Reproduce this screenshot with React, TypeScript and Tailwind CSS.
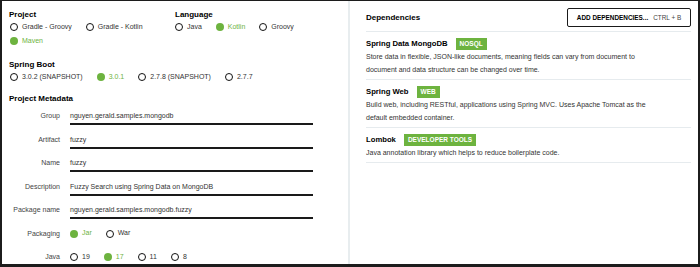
import React from "react";

function Radio({ label, selected }: { label: string; selected?: boolean }) {
  return (
    <div className="flex items-center gap-[4px] h-[14px]">
      {selected ? (
        <span className="block w-[8px] h-[8px] rounded-full bg-[#6db33f]" />
      ) : (
        <span className="block w-[8px] h-[8px] rounded-full border-[1.5px] border-[#111]" />
      )}
      <span className={selected ? "text-[#6db33f]" : "text-[#333]"}>{label}</span>
    </div>
  );
}

function Heading({ children }: { children: React.ReactNode }) {
  return <div className="text-[8px] leading-[11px] font-bold text-black">{children}</div>;
}

function Field({ label, value }: { label: string; value: string }) {
  return (
    <div className="flex items-start h-[15px]">
      <div className="w-[51px] text-right leading-[12px] text-[#444]">{label}</div>
      <div className="ml-[10px] w-[243px] leading-[12px] pb-[1px] border-b-2 border-[#1a1a1a] text-[#333]">
        {value}
      </div>
    </div>
  );
}

function OptRow({ label, children }: { label: string; children: React.ReactNode }) {
  return (
    <div className="flex items-start h-[15px]">
      <div className="w-[51px] text-right leading-[12px] text-[#444]">{label}</div>
      <div className="ml-[10px] flex gap-x-[14px] -mt-[1px]">{children}</div>
    </div>
  );
}

function Dep({ name, badge, desc }: { name: string; badge: string; desc: string }) {
  return (
    <div className="pt-[6px] pb-[3px] border-b border-[#e6ebee]">
      <div className="flex items-center h-[12px] gap-[8px]">
        <span className="text-[7.7px] font-bold text-black">{name}</span>
        <span className="h-[12px] px-[4px] flex items-center bg-[#6db33f] text-white font-bold text-[6.5px] uppercase">
          {badge}
        </span>
      </div>
      <div className="text-[7px] leading-[13px] text-[#333] w-[290px]">{desc}</div>
    </div>
  );
}

export default function App() {
  return (
    <div
      className="w-[700px] h-[267px] bg-white border-t border-l-2 border-r-2 border-b-[3px] border-[#1c1c1c] flex text-[7px]"
      style={{ fontFamily: '"Liberation Sans", Arial, sans-serif' }}
    >
      <div className="w-[348px] h-full border-r-2 border-[#e8edef] pl-[7px] pt-[8px]">
        <div className="flex">
          <div className="w-[166px]">
            <Heading>Project</Heading>
            <div className="flex flex-wrap gap-x-[14px] w-[160px] pl-[1px]">
              <Radio label="Gradle - Groovy" />
              <Radio label="Gradle - Kotlin" />
              <Radio label="Maven" selected />
            </div>
          </div>
          <div>
            <Heading>Language</Heading>
            <div className="flex gap-x-[14px]">
              <Radio label="Java" />
              <Radio label="Kotlin" selected />
              <Radio label="Groovy" />
            </div>
          </div>
        </div>
        <div className="mt-[11px]">
          <Heading>Spring Boot</Heading>
          <div className="flex gap-x-[14px] pl-[1px]">
            <Radio label="3.0.2 (SNAPSHOT)" />
            <Radio label="3.0.1" selected />
            <Radio label="2.7.8 (SNAPSHOT)" />
            <Radio label="2.7.7" />
          </div>
        </div>
        <div className="mt-[9px]">
          <Heading>Project Metadata</Heading>
          <div className="mt-[6px] flex flex-col gap-y-[8.5px]">
            <Field label="Group" value="nguyen.gerald.samples.mongodb" />
            <Field label="Artifact" value="fuzzy" />
            <Field label="Name" value="fuzzy" />
            <Field label="Description" value="Fuzzy Search using Spring Data on MongoDB" />
            <Field label="Package name" value="nguyen.gerald.samples.mongodb.fuzzy" />
            <OptRow label="Packaging">
              <Radio label="Jar" selected />
              <Radio label="War" />
            </OptRow>
            <OptRow label="Java">
              <Radio label="19" />
              <Radio label="17" selected />
              <Radio label="11" />
              <Radio label="8" />
            </OptRow>
          </div>
        </div>
      </div>
      <div className="flex-1 pl-[16px] pr-[7px] pt-[7px]">
        <div className="flex items-center justify-between h-[19px]">
          <span className="text-[8px] font-bold text-black">Dependencies</span>
          <div className="h-[19px] w-[124px] border-[1.5px] border-[#1a1a1a] rounded-[2px] flex items-center justify-center gap-[5px] text-[6.4px]">
            <span className="font-bold text-black">ADD DEPENDENCIES...</span>
            <span className="text-[#444]">CTRL + B</span>
          </div>
        </div>
        <div className="mt-[4px] border-b border-[#e6ebee]" />
        <Dep
          name="Spring Data MongoDB"
          badge="NoSQL"
          desc="Store data in flexible, JSON-like documents, meaning fields can vary from document to document and data structure can be changed over time."
        />
        <Dep
          name="Spring Web"
          badge="Web"
          desc="Build web, including RESTful, applications using Spring MVC. Uses Apache Tomcat as the default embedded container."
        />
        <Dep
          name="Lombok"
          badge="Developer Tools"
          desc="Java annotation library which helps to reduce boilerplate code."
        />
      </div>
    </div>
  );
}
